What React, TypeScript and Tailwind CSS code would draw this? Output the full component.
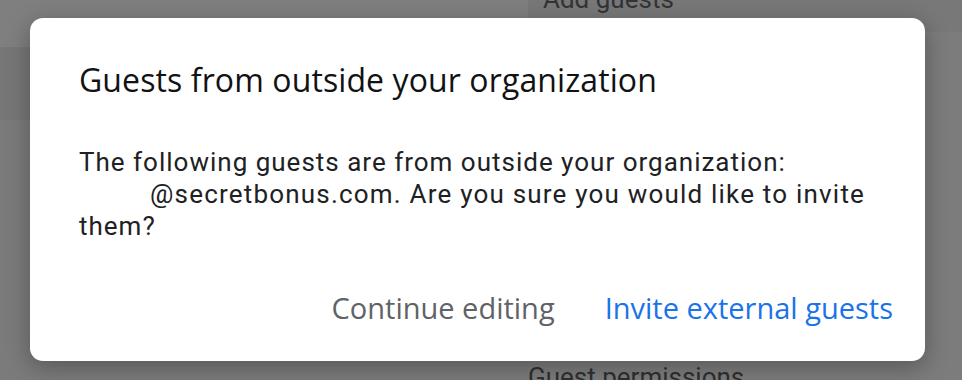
import React from "react";

export default function App() {
  return (
    <div className="relative w-[962px] h-[380px] overflow-hidden bg-[#7b7b7b]" style={{ fontFamily: "Roboto, sans-serif" }}>
      <div className="flex h-full">
        <div className="w-[528px] flex flex-col">
          <div className="h-[47px] bg-[#7f7f7f]" />
          <div className="h-[73px] bg-[#777777]" />
          <div className="flex-1 bg-[#7b7b7b]" />
        </div>
        <div className="flex-1 flex flex-col">
          <div className="h-[32px] bg-[#787878] relative">
            <div className="absolute left-[15px] top-[-20px] text-[26px] text-[#333436]">Add guests</div>
          </div>
          <div className="flex-1 bg-[#7c7c7c] relative">
            <div className="absolute left-0 top-[332px] text-[26px] text-[#2e2f31] leading-none">Guest permissions</div>
          </div>
        </div>
      </div>
      <div className="absolute left-[30px] top-[18px] w-[895px] h-[343px] bg-white rounded-[13px] shadow-[0_6px_24px_rgba(0,0,0,0.3)] px-[49px] pt-[44px]">
        <div className="text-[32px] leading-[36px] text-[#111213] tracking-[0.1px]" style={{ fontFamily: '"Open Sans", sans-serif' }}>
          Guests from outside your organization
        </div>
        <div className="mt-[48px] text-[26px] leading-[32px] text-[#202124] tracking-[1px]">
          The following guests are from outside your organization:
          <br />
          <span className="inline-block w-[71px]" />
          <span className="tracking-[1.2px]">@secretbonus.com. Are you sure you would like to invite</span>
          <br />
          them?
        </div>
        <div className="flex justify-end gap-[50px] mt-[50px] mr-[-17px] text-[29px] leading-[32px]" style={{ fontFamily: '"Open Sans", sans-serif' }}>
          <span className="text-[#5f6368]">Continue editing</span>
          <span className="text-[#1a73e8]">Invite external guests</span>
        </div>
      </div>
    </div>
  );
}
